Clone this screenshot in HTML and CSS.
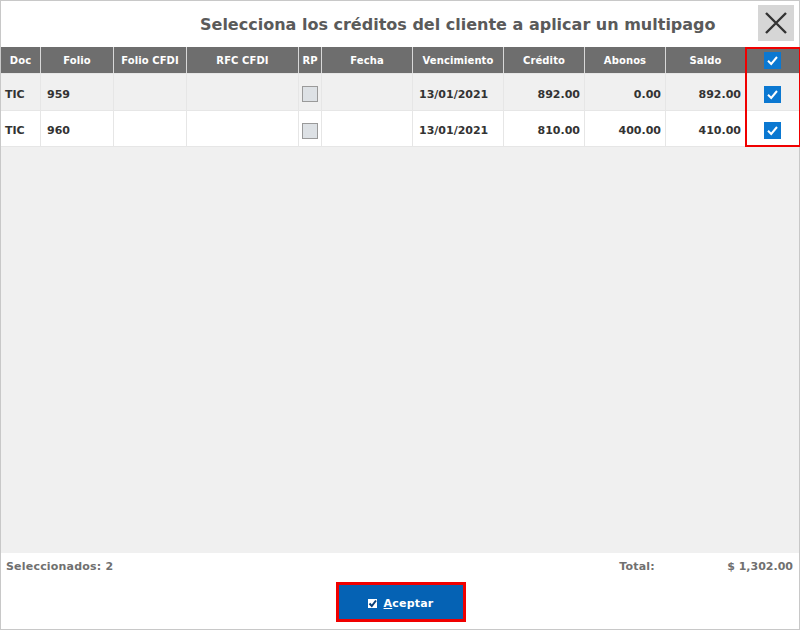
FILE: index.html
```html
<!DOCTYPE html>
<html>
<head>
<meta charset="utf-8">
<link rel="stylesheet" href="styles.css">
</head>
<body>
<div class="dialog">
   <div class="top">
      <h1 class="title">Selecciona los créditos del cliente a aplicar un multipago</h1>
      <button class="close" title="Cerrar">
         <svg width="24" height="24" viewBox="0 0 24 24"><path d="M2 2 L22 22 M22 2 L2 22" stroke="#333" stroke-width="2.4" fill="none"/></svg>
      </button>
   </div>
   <div class="grid">
      <table>
         <tr>
            <th class="c-doc">Doc</th>
            <th class="c-folio">Folio</th>
            <th class="c-fcfdi">Folio CFDI</th>
            <th class="c-rfc">RFC CFDI</th>
            <th class="c-rp">RP</th>
            <th class="c-fecha">Fecha</th>
            <th class="c-venc">Vencimiento</th>
            <th class="c-cred">Crédito</th>
            <th class="c-abon">Abonos</th>
            <th class="c-saldo">Saldo</th>
            <th class="c-sel"><span class="chk"><svg width="13" height="13" viewBox="0 0 13 13"><path d="M2 6.8 L5.2 10 L11 3" stroke="#fff" stroke-width="2" fill="none"/></svg></span></th>
         </tr>
         <tr class="odd">
            <td>TIC</td>
            <td class="pad">959</td>
            <td></td>
            <td></td>
            <td class="mid"><span class="rp"></span></td>
            <td></td>
            <td class="pad">13/01/2021</td>
            <td class="num">892.00</td>
            <td class="num">0.00</td>
            <td class="num">892.00</td>
            <td class="mid"><span class="chk"><svg width="13" height="13" viewBox="0 0 13 13"><path d="M2 6.8 L5.2 10 L11 3" stroke="#fff" stroke-width="2" fill="none"/></svg></span></td>
         </tr>
         <tr class="last">
            <td>TIC</td>
            <td class="pad">960</td>
            <td></td>
            <td></td>
            <td class="mid"><span class="rp"></span></td>
            <td></td>
            <td class="pad">13/01/2021</td>
            <td class="num">810.00</td>
            <td class="num">400.00</td>
            <td class="num">410.00</td>
            <td class="mid"><span class="chk"><svg width="13" height="13" viewBox="0 0 13 13"><path d="M2 6.8 L5.2 10 L11 3" stroke="#fff" stroke-width="2" fill="none"/></svg></span></td>
         </tr>
      </table>
      <div class="mark"></div>
   </div>
   <div class="foot">
      <div class="totals">
         <span class="count">Seleccionados: 2</span>
         <span class="total-lbl">Total:</span>
         <span class="total">$ 1,302.00</span>
      </div>
      <div class="actions">
         <button class="ok"><span class="okbox"><svg width="9" height="9" viewBox="0 0 9 9"><path d="M1.5 4.5 L3.8 7 L8 1.5" stroke="#0a3f7a" stroke-width="2" fill="none"/></svg></span><u>A</u>ceptar</button>
      </div>
   </div>
</div>
</body>
</html>
```

FILE: styles.css
```css
html, body{
   margin: 0;
   padding: 0;
   background: #fff;
}
body{
   font-family: "DejaVu Sans", Verdana, sans-serif;
}
.dialog{
   width: 800px;
   height: 630px;
   box-sizing: border-box;
   border: 1px solid #c8c8c8;
   display: flex;
   flex-direction: column;
}
.top{
   height: 46px;
   display: flex;
   align-items: center;
   position: relative;
}
.title{
   margin: 0 0 0 199px;
   font-size: 16px;
   font-weight: bold;
   color: #5a5a5a;
   letter-spacing: 0;
   white-space: nowrap;
}
.close{
   position: absolute;
   right: 5px;
   top: 4px;
   width: 36px;
   height: 36px;
   border: 0;
   padding: 0;
   background: #d6d6d6;
   display: flex;
   align-items: center;
   justify-content: center;
}
.grid{
   flex: 1;
   background: #f0f0f0;
   position: relative;
}
table{
   border-collapse: collapse;
   width: 798px;
   table-layout: fixed;
   font-size: 11px;
   font-weight: bold;
}
th{
   background: #6e6e6e;
   color: #fff;
   height: 26px;
   padding: 0;
   font-size: 10px;
   letter-spacing: 0.1px;
   text-align: center;
   border-left: 1px solid #d8d8d8;
   border-bottom: 1px solid #e6e6e6;
}
th:first-child{
   border-left: 0;
}
td{
   height: 32px;
   padding: 4px 0 0 5px;
   color: #333;
   background: #fff;
   border-left: 1px solid #e6e6e6;
   border-bottom: 1px solid #e6e6e6;
}
tr.last td{
   height: 31px;
}
td:first-child{
   border-left: 0;
   padding-left: 4px;
}
tr.odd td{
   background: #f0f0f0;
}
td.pad{
   padding-left: 6px;
}
td.num{
   text-align: right;
   padding-right: 4px;
   padding-left: 0;
}
td.mid{
   text-align: center;
   padding-left: 0;
}
.c-doc{ width: 39px; }
.c-folio{ width: 72px; }
.c-fcfdi{ width: 72px; }
.c-rfc{ width: 111px; }
.c-rp{ width: 22px; }
.c-fecha{ width: 90px; }
.c-venc{ width: 90px; }
.c-cred{ width: 80px; }
.c-abon{ width: 80px; }
.c-saldo{ width: 79px; }
.rp{
   display: inline-block;
   width: 14px;
   height: 14px;
   border: 1px solid #9a9a9a;
   background: #dde1e5;
   vertical-align: middle;
}
.chk{
   display: inline-block;
   width: 17px;
   height: 17px;
   background: #0b78d1;
   vertical-align: middle;
   line-height: 0;
}
.chk svg{
   margin-top: 2px;
}
.mark{
   position: absolute;
   left: 744px;
   top: 0;
   width: 52px;
   height: 96px;
   border: 2px solid #f00000;
}
.foot{
   height: 76px;
   background: #fff;
}
.totals{
   display: flex;
   font-size: 11px;
   font-weight: bold;
   color: #707070;
   padding: 7px 6px 0 5px;
   height: 15px;
   letter-spacing: 0.2px;
}
.count{
   flex: 1;
}
.total-lbl{
   width: 108px;
}
.total{
   text-align: right;
   letter-spacing: 0;
}
.actions{
   display: flex;
   justify-content: center;
   padding-top: 7px;
}
.ok{
   width: 130px;
   height: 40px;
   margin-left: 1px;
   background: #0562b4;
   border: 3px solid #f00000;
   color: #fff;
   font-family: "DejaVu Sans", Verdana, sans-serif;
   font-size: 11px;
   font-weight: bold;
   letter-spacing: 0.2px;
   display: flex;
   align-items: center;
   justify-content: center;
   padding: 2px 0 0 0;
}
.okbox{
   display: inline-block;
   width: 9px;
   height: 9px;
   background: #fff;
   margin-right: 7px;
   line-height: 0;
}
```
